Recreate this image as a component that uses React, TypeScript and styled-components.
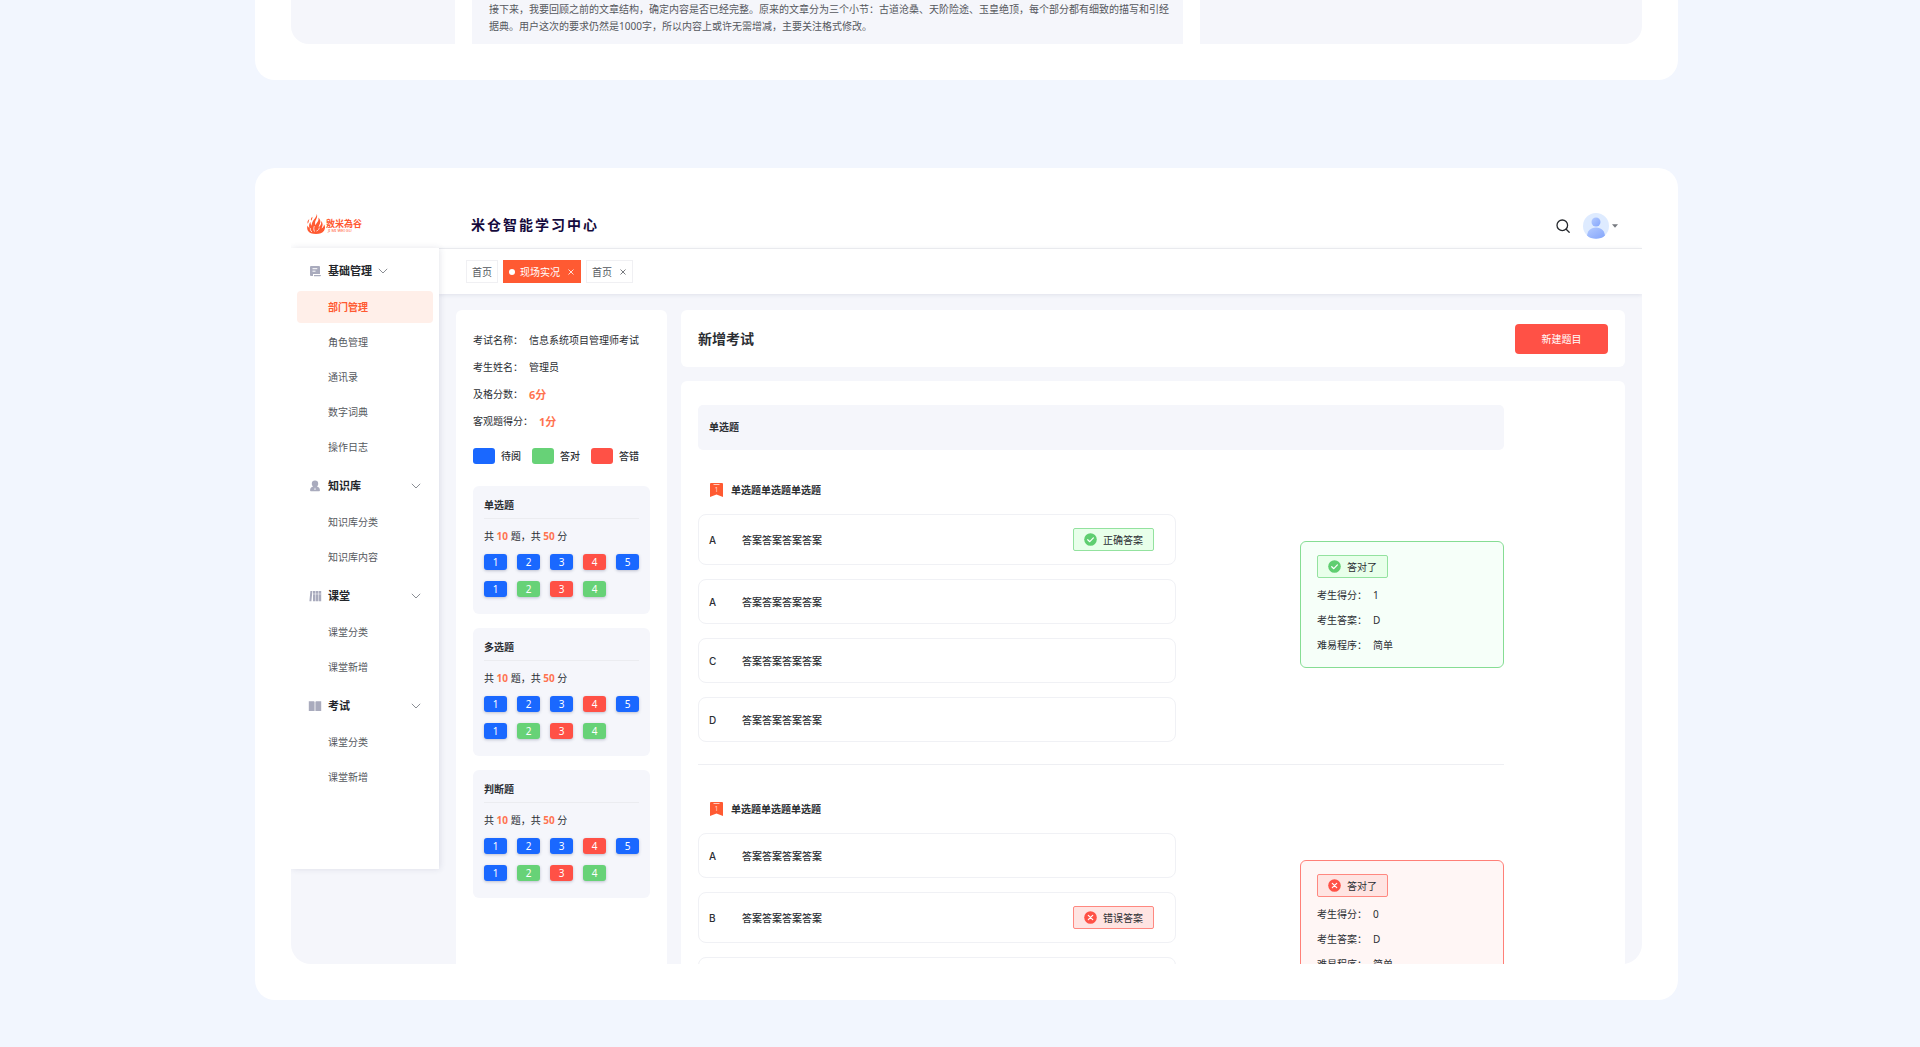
import React from "react";
import styled, { createGlobalStyle } from "styled-components";

const color = {
  page: "#f2f6fe",
  canvas: "#f5f6fb",
  text: "#2b2e33",
  muted: "#55585e",
  line: "#eeeff3",
  brand: "#ff5a32",
  pending: "#1a68ff",
  right: "#67d277",
  wrong: "#ff5146",
};

type Mark = "pending" | "right" | "wrong";

const GlobalStyle = createGlobalStyle`
  *, *::before, *::after { box-sizing: border-box; }
  body {
    margin: 0;
    background: ${color.page};
    color: ${color.text};
    font-family: "Noto Sans", "Noto Sans CJK SC", sans-serif;
    font-size: 10px;
    line-height: 16px;
  }
  h1, h2, h3, p, ul, ol, dl, dd { margin: 0; padding: 0; }
  ul, ol { list-style: none; }
  button { font: inherit; color: inherit; border: 0; padding: 0; background: none; cursor: pointer; }
  a { color: inherit; text-decoration: none; }
  svg { display: block; flex: none; }
`;

const Page = styled.div`
  display: flex;
  flex-direction: column;
  gap: 88px;
  padding: 0 242px 47px 255px;
`;

const Showcase = styled.section<{ $continued?: boolean }>`
  background: #fff;
  border-radius: ${(p) => (p.$continued ? "0 0 20px 20px" : "20px")};
  padding: ${(p) => (p.$continued ? "0 36px 36px" : "36px")};
`;

/* Article preview */

const ArticleScreen = styled.div`
  display: grid;
  grid-template-columns: 164fr 711fr 442fr;
  gap: 17px;
  border-radius: 0 0 18px 18px;
  overflow: hidden;
`;

const ArticleColumn = styled.div`
  background: ${color.canvas};
  padding: 1px 14px 9px 17px;
  line-height: 17px;
  color: ${color.muted};
`;

/* Exam preview */

const Screen = styled.div`
  display: flex;
  flex-direction: column;
  aspect-ratio: 16 / 9;
  background: ${color.canvas};
  border-radius: 0 0 20px 20px;
  overflow: hidden;
`;

const Header = styled.header`
  display: flex;
  flex: none;
  align-items: center;
  height: 44px;
  padding-right: 24px;
  background: #fff;
`;

const Brand = styled.a`
  display: flex;
  align-items: center;
  gap: 1px;
  width: 180px;
  padding: 0 0 4px 16px;
  color: ${color.brand};
`;

const BrandWords = styled.span`
  display: flex;
  flex-direction: column;
  padding-top: 3px;
  font-size: 9px;
  font-weight: 700;
  line-height: 11px;
`;

const BrandLatin = styled.small`
  padding-left: 2px;
  font-size: 4px;
  line-height: 4px;
  font-weight: 400;
`;

const ProductName = styled.h1`
  flex: 1;
  padding-bottom: 2px;
  color: #150a3c;
  font-size: 14px;
  line-height: 20px;
  font-weight: 700;
  letter-spacing: 2px;
`;

const HeaderTools = styled.div`
  display: flex;
  align-items: center;
  gap: 13px;
`;

const AccountButton = styled.button`
  display: flex;
  align-items: center;
  gap: 3px;
`;

const Workspace = styled.div`
  display: flex;
  flex: 1;
  min-height: 0;
  align-items: flex-start;
`;

const Sidebar = styled.nav`
  display: flex;
  flex: none;
  flex-direction: column;
  gap: 7px;
  width: 148px;
  padding: 7px 6px 76px;
  background: #fff;
  box-shadow: 1px 0 6px rgba(40, 50, 90, 0.12);
  position: relative;
`;

const MenuHead = styled.button<{ $compact?: boolean }>`
  display: flex;
  align-items: center;
  width: 100%;
  height: 32px;
  padding: 0 12px 0 11px;
  gap: 6px;
  font-size: 11px;
  font-weight: 600;
  text-align: left;
  color: #23262b;

  & > span {
    flex: ${(p) => (p.$compact ? "none" : "1")};
  }
`;

const MenuIcon = styled.svg`
  width: 14px;
  height: 12px;
  fill: #a9abbd;
`;

const MenuList = styled.ul`
  display: flex;
  flex-direction: column;
  gap: 3px;
  padding-top: 4px;
`;

const MenuLink = styled.a<{ $active?: boolean }>`
  display: block;
  padding: 8px 0 8px 31px;
  border-radius: 4px;
  color: ${(p) => (p.$active ? color.brand : color.muted)};
  font-weight: ${(p) => (p.$active ? 600 : 400)};
  background: ${(p) => (p.$active ? "#ffefe9" : "transparent")};
`;

const Main = styled.main`
  display: flex;
  flex: 1;
  flex-direction: column;
  align-self: stretch;
  min-width: 0;
`;

const TabBar = styled.div`
  display: flex;
  flex: none;
  gap: 5px;
  padding: 11px 27px;
  background: #fff;
  border-top: 1px solid #e9eaee;
  box-shadow: 0 1px 4px rgba(40, 50, 90, 0.1);
`;

const Tab = styled.div<{ $active?: boolean }>`
  display: flex;
  align-items: center;
  height: 23px;
  padding: 0 5px;
  border: 1px solid ${(p) => (p.$active ? color.brand : "#f0f0f3")};
  background: ${(p) => (p.$active ? color.brand : "#fff")};
  color: ${(p) => (p.$active ? "#fff" : color.muted)};
`;

const TabDot = styled.span`
  width: 6px;
  height: 6px;
  margin-right: 5px;
  border-radius: 50%;
  background: #fff;
`;

const TabClose = styled.button`
  margin: 0 1px 0 8px;
`;

const Content = styled.div`
  display: flex;
  flex: 1;
  min-height: 0;
  gap: 14px;
  padding: 16px 17px 0;
`;

const ExamPanel = styled.aside`
  flex: none;
  width: 211px;
  padding: 17px;
  background: #fff;
  border-radius: 6px 6px 0 0;
`;

const Facts = styled.dl<{ $pitch: number }>`
  line-height: ${(p) => p.$pitch}px;

  & > div {
    display: flex;
    gap: 6px;
  }
`;

const Score = styled.dd`
  color: #ff7350;
  font-size: 11px;
  font-weight: 700;
`;

const Legend = styled.ul`
  display: flex;
  gap: 11px;
  padding: 13px 0 22px;
  font-weight: 500;

  & > li {
    display: flex;
    gap: 6px;
  }
`;

const Swatch = styled.span<{ $mark: Mark }>`
  width: 22px;
  height: 16px;
  border-radius: 3px;
  background: ${(p) => color[p.$mark]};
`;

const GroupStack = styled.div`
  display: flex;
  flex-direction: column;
  gap: 14px;
`;

const GroupCard = styled.section`
  padding: 11px 11px 17px;
  background: ${color.canvas};
  border-radius: 6px;
`;

const GroupTitle = styled.h3`
  padding-bottom: 5px;
  border-bottom: 1px solid #ebecf0;
  font-size: 10px;
  font-weight: 600;
`;

const GroupSummary = styled.p`
  padding: 9px 0 10px;

  & > b {
    color: #ff7350;
  }
`;

const NumberGrid = styled.div`
  display: grid;
  grid-template-columns: repeat(5, 23px);
  justify-content: space-between;
  row-gap: 11px;
`;

const NumberChip = styled.button<{ $mark: Mark }>`
  height: 16px;
  border-radius: 3px;
  background: ${(p) => color[p.$mark]};
  box-shadow: 0 1px 3px rgba(60, 70, 110, 0.3);
  color: #fff;
  text-align: center;
`;

const PaperColumn = styled.div`
  display: flex;
  flex: 1;
  flex-direction: column;
  gap: 14px;
  min-width: 0;
`;

const TitlePanel = styled.div`
  display: flex;
  align-items: center;
  justify-content: space-between;
  height: 57px;
  padding: 0 17px;
  background: #fff;
  border-radius: 6px;
`;

const PanelTitle = styled.h2`
  font-size: 14px;
  line-height: 20px;
  font-weight: 600;
`;

const PrimaryButton = styled.button`
  width: 93px;
  height: 30px;
  border-radius: 4px;
  background: ${color.wrong};
  color: #fff;
`;

const PaperPanel = styled.div`
  flex: 1;
  min-height: 0;
  padding: 24px 121px 0 17px;
  background: #fff;
  border-radius: 6px 6px 0 0;
`;

const SectionBar = styled.h3`
  padding: 14px 11px 15px;
  background: ${color.canvas};
  border-radius: 5px;
  font-size: 10px;
  font-weight: 600;
`;

const Question = styled.article`
  display: grid;
  grid-template-columns: 478fr 204fr;
  column-gap: 124px;
  align-items: start;
  padding: 30px 0 22px;
  border-bottom: 1px solid ${color.line};

  & + & {
    padding-top: 34px;
  }
`;

const QuestionTitle = styled.h4`
  display: flex;
  grid-column: 1 / -1;
  align-items: center;
  gap: 8px;
  height: 20px;
  margin: 0 0 14px;
  padding-left: 12px;
  font-size: 10px;
  font-weight: 600;
`;

const Answers = styled.ol`
  display: flex;
  flex-direction: column;
  gap: 14px;
`;

const Answer = styled.li`
  display: flex;
  align-items: center;
  min-height: 45px;
  padding: 13px 21px 13px 10px;
  border: 1px solid #f0f1f5;
  border-radius: 8px;
  font-weight: 500;
`;

const AnswerKey = styled.span`
  width: 33px;
  font-family: Inter, "Noto Sans", sans-serif;
`;

const AnswerText = styled.span`
  flex: 1;
`;

const Tag = styled.span<{ $ok: boolean }>`
  display: inline-flex;
  align-items: center;
  gap: 6px;
  height: 23px;
  padding: 0 10px;
  border: 1px solid ${(p) => (p.$ok ? "#93e29f" : "#ff8880")};
  border-radius: 2px;
  background: ${(p) => (p.$ok ? "#e8ffea" : "#ffe4e2")};
  font-weight: 400;
`;

const ResultCard = styled.div<{ $ok: boolean }>`
  margin-top: 27px;
  padding: 13px 16px 9px;
  border: 1px solid ${(p) => (p.$ok ? "#86dd94" : "#ff8078")};
  border-radius: 6px;
  background: ${(p) => (p.$ok ? "#f6fff9" : "#fff6f5")};

  & > dl {
    padding-top: 5px;
  }
`;

/* Drawings */

const Flame = () => (
  <svg width="18" height="20" viewBox="0 0 18 20" fill={color.brand} aria-hidden>
    <path d="M9.800 0c.7 2.200.3 3.800-.7 5.400C8 7.300 7.800 9 8.300 11.200c.8-1.200 1.700-2.300 2.500-3.600.8-1.400.9-2.700.5-4.100 2 1.700 2.500 3.800 1.700 6-.6 1.500-1.200 2.400-1.300 3.700 1.200-.9 1.900-2 2.300-3.300.3-1 .3-1.800 0-2.800 1.500 1.300 1.900 3 1.400 4.900-.3 1-.7 1.700-.7 2.600.9-.6 1.500-1.400 1.900-2.300.3-.7.4-1.300.3-2.100 1.500 1.900 1.500 4.500.1 6.500C15.400 19 12.800 20 9 20c-4 0-6.700-.9-8.100-3.200C0 15.200-.1 13.300.6 11.400c.3 1 .9 1.900 1.800 2.600C1.700 11.800 2 9.700 3.500 7.700c-.1 1.500.2 2.900 1.100 4.100C4.700 9.400 5.400 7.500 7 5.500 8.500 3.600 9.700 2.100 9.800 0z" />
    <path d="M.8 9.800C.1 8 .6 6.500 2.300 5c-.5 1.600-.4 3-1.500 4.800zM4.100 6.700c-.5-1.600 0-2.900 1.400-4-.2 1.400-.3 2.600-1.400 4z" />
    <path d="M5 18c-1.600-1.300-2-2.600-1.600-4M7.500 17.500c-1-2-.8-3.600-.2-5.300M9.500 17c2-.6 2.600-2 2.700-3.400" stroke="#fff" strokeWidth=".8" fill="none" />
  </svg>
);

const SearchIcon = () => (
  <svg width="14" height="14" viewBox="0 0 14 14" fill="none" stroke="#26292e" strokeWidth="1.300" strokeLinecap="round" aria-hidden>
    <circle cx="6.300" cy="6.300" r="5.300" />
    <path d="M10.200 10.200 13.200 13.200" />
  </svg>
);

const Avatar = () => (
  <svg width="26" height="26" viewBox="0 0 26 26" aria-hidden>
    <defs>
      <linearGradient id="avatar" x1="0" y1="0" x2="1" y2="1">
        <stop offset="0" stopColor="#b4cbff" />
        <stop offset="1" stopColor="#84a5fb" />
      </linearGradient>
      <clipPath id="avatarClip">
        <circle cx="13" cy="13" r="13" />
      </clipPath>
    </defs>
    <g clipPath="url(#avatarClip)">
      <rect width="26" height="26" fill="#deebff" />
      <circle cx="13" cy="9" r="4.500" fill="url(#avatar)" />
      <path d="M4 24c0-6 3.500-9.500 9-9.500s9 3.500 9 9.500c-2.500 2.200-15.500 2.200-18 0z" fill="url(#avatar)" />
    </g>
  </svg>
);

const Caret = () => (
  <svg width="6" height="4" viewBox="0 0 6 4" fill="#777a80" aria-hidden>
    <path d="M0 .3h6L3 3.700z" />
  </svg>
);

const Chevron = () => (
  <svg width="10" height="10" viewBox="0 0 10 10" fill="none" stroke="#8b8e94" aria-hidden>
    <path d="M.8 2.800 5 7l4.200-4.200" />
  </svg>
);

const Cross = () => (
  <svg width="6" height="6" viewBox="0 0 6 6" fill="none" stroke="currentColor" strokeWidth=".8" aria-hidden>
    <path d="M.5.5l5 5M5.500.5l-5 5" />
  </svg>
);

const Verdict = ({ ok }: { ok: boolean }) => (
  <svg width="13" height="13" viewBox="0 0 13 13" fill="none" stroke="#fff" strokeWidth="1.200" strokeLinecap="round" strokeLinejoin="round" aria-hidden>
    <circle cx="6.500" cy="6.500" r="6.300" fill={ok ? "#5fce70" : color.wrong} stroke="none" />
    {ok ? <path d="M3.700 6.700 5.800 8.700 9.400 4.900" /> : <path d="M4.300 4.300l4.400 4.400M8.700 4.300 4.300 8.700" />}
  </svg>
);

const Bookmark = () => (
  <svg width="13" height="14" viewBox="0 0 13 14" aria-hidden>
    <path d="M1 0h11a1 1 0 0 1 1 1v13l-6.500-2.500L0 14V1a1 1 0 0 1 1-1z" fill={color.brand} />
    <path d="M3.500 1.500h6" stroke="#fff" strokeWidth=".7" />
    <text x="6.500" y="9.300" fill="#ffd5c8" fontSize="7" fontWeight="400" textAnchor="middle">1</text>
  </svg>
);

const menuIcons: Record<string, React.ReactNode> = {
  base: (
    <>
      <path d="M3 1h8a1 1 0 0 1 1 1v7H5v2H3a1 1 0 0 1-1-1V2a1 1 0 0 1 1-1zM6 10h7c0 .9-.5 1.300-1.300 1.300H6z" />
      <path d="M4.500 3.700h4.800M4.500 6.200h3" stroke="#fff" strokeWidth="1" />
    </>
  ),
  knowledge: (
    <>
      <path d="M7 .6a3.200 3.200 0 0 1 3.200 3.200c0 1.300-.6 2.200-1.300 2.800 1.800.6 3 1.500 3 3.400v.6c0 .4-.3.700-.7.700H2.800c-.4 0-.7-.3-.7-.7V10c0-1.900 1.200-2.800 3-3.400-.7-.6-1.300-1.500-1.300-2.800A3.200 3.200 0 0 1 7 .6z" />
      <path d="M7 7.300 6.300 9.800h1.400z" fill="#fff" />
    </>
  ),
  lesson: (
    <>
      <path d="M2.400 1h2L3.400 11.300H1.400zM5 1h2.400v10.300H5zM7.900 1h2.400v10.300H7.900zM10.800 1h2.400v10.300h-2.400z" />
      <path d="M5 4h8.200" stroke="#fff" strokeWidth=".5" />
    </>
  ),
  exam: <path d="M.8 1.200h5c.4 0 .8.3.8.8v9H.8zM13.200 1.200h-5c-.4 0-.8.3-.8.8v9h5.800z" />,
};

/* Data */

const menu = [
  { icon: "base", title: "基础管理", items: ["部门管理", "角色管理", "通讯录", "数字词典", "操作日志"] },
  { icon: "knowledge", title: "知识库", items: ["知识库分类", "知识库内容"] },
  { icon: "lesson", title: "课堂", items: ["课堂分类", "课堂新增"] },
  { icon: "exam", title: "考试", items: ["课堂分类", "课堂新增"] },
];

const legend: [Mark, string][] = [
  ["pending", "待阅"],
  ["right", "答对"],
  ["wrong", "答错"],
];

const numbers: [number, Mark][] = [
  [1, "pending"],
  [2, "pending"],
  [3, "pending"],
  [4, "wrong"],
  [5, "pending"],
  [1, "pending"],
  [2, "right"],
  [3, "wrong"],
  [4, "right"],
];

type AnswerItem = { key: string; text: string; tag?: string };

const answer = "答案答案答案答案";

const questions: { title: string; ok: boolean; score: string; answers: AnswerItem[] }[] = [
  {
    title: "单选题单选题单选题",
    ok: true,
    score: "1",
    answers: [
      { key: "A", text: answer, tag: "正确答案" },
      { key: "A", text: answer },
      { key: "C", text: answer },
      { key: "D", text: answer },
    ],
  },
  {
    title: "单选题单选题单选题",
    ok: false,
    score: "0",
    answers: [
      { key: "A", text: answer },
      { key: "B", text: answer, tag: "错误答案" },
      { key: "", text: "" },
    ],
  },
];

export default function App() {
  return (
    <>
      <GlobalStyle />
      <Page>
        <Showcase $continued>
          <ArticleScreen>
            <ArticleColumn />
            <ArticleColumn>
              <p>
                接下来，我要回顾之前的文章结构，确定内容是否已经完整。原来的文章分为三个小节：古道沧桑、天阶险途、玉皇绝顶，每个部分都有细致的描写和引经据典。用户这次的要求仍然是1000字，所以内容上或许无需增减，主要关注格式修改。
              </p>
            </ArticleColumn>
            <ArticleColumn />
          </ArticleScreen>
        </Showcase>

        <Showcase>
          <Screen>
            <Header>
              <Brand href="#">
                <Flame />
                <BrandWords>
                  敫米為谷
                  <BrandLatin>JI MI WEI GU</BrandLatin>
                </BrandWords>
              </Brand>
              <ProductName>米仓智能学习中心</ProductName>
              <HeaderTools>
                <button type="button" aria-label="搜索">
                  <SearchIcon />
                </button>
                <AccountButton type="button" aria-label="账户">
                  <Avatar />
                  <Caret />
                </AccountButton>
              </HeaderTools>
            </Header>

            <Workspace>
              <Sidebar>
                {menu.map((group, g) => (
                  <div key={group.title}>
                    <MenuHead type="button" $compact={g === 0}>
                      <MenuIcon viewBox="0 0 14 12" aria-hidden>
                        {menuIcons[group.icon]}
                      </MenuIcon>
                      <span>{group.title}</span>
                      <Chevron />
                    </MenuHead>
                    <MenuList>
                      {group.items.map((item, i) => (
                        <li key={item}>
                          <MenuLink href="#" $active={g === 0 && i === 0}>
                            {item}
                          </MenuLink>
                        </li>
                      ))}
                    </MenuList>
                  </div>
                ))}
              </Sidebar>

              <Main>
                <TabBar>
                  <Tab>
                    <a href="#">首页</a>
                  </Tab>
                  <Tab $active>
                    <TabDot />
                    <a href="#">现场实况</a>
                    <TabClose type="button" aria-label="关闭">
                      <Cross />
                    </TabClose>
                  </Tab>
                  <Tab>
                    <a href="#">首页</a>
                    <TabClose type="button" aria-label="关闭">
                      <Cross />
                    </TabClose>
                  </Tab>
                </TabBar>

                <Content>
                  <ExamPanel>
                    <Facts $pitch={27}>
                      <div>
                        <dt>考试名称：</dt>
                        <dd>信息系统项目管理师考试</dd>
                      </div>
                      <div>
                        <dt>考生姓名：</dt>
                        <dd>管理员</dd>
                      </div>
                      <div>
                        <dt>及格分数：</dt>
                        <Score>6分</Score>
                      </div>
                      <div>
                        <dt>客观题得分：</dt>
                        <Score>1分</Score>
                      </div>
                    </Facts>
                    <Legend>
                      {legend.map(([mark, label]) => (
                        <li key={mark}>
                          <Swatch $mark={mark} />
                          {label}
                        </li>
                      ))}
                    </Legend>
                    <GroupStack>
                      {["单选题", "多选题", "判断题"].map((title) => (
                        <GroupCard key={title}>
                          <GroupTitle>{title}</GroupTitle>
                          <GroupSummary>
                            共 <b>10</b> 题，共 <b>50</b> 分
                          </GroupSummary>
                          <NumberGrid>
                            {numbers.map(([n, mark], i) => (
                              <NumberChip key={i} type="button" $mark={mark}>
                                {n}
                              </NumberChip>
                            ))}
                          </NumberGrid>
                        </GroupCard>
                      ))}
                    </GroupStack>
                  </ExamPanel>

                  <PaperColumn>
                    <TitlePanel>
                      <PanelTitle>新增考试</PanelTitle>
                      <PrimaryButton type="button">新建题目</PrimaryButton>
                    </TitlePanel>
                    <PaperPanel>
                      <SectionBar>单选题</SectionBar>
                      {questions.map((q, i) => (
                        <Question key={i}>
                          <QuestionTitle>
                            <Bookmark />
                            {q.title}
                          </QuestionTitle>
                          <Answers>
                            {q.answers.map((a, n) => (
                              <Answer key={n}>
                                <AnswerKey>{a.key}</AnswerKey>
                                <AnswerText>{a.text}</AnswerText>
                                {a.tag && (
                                  <Tag $ok={q.ok}>
                                    <Verdict ok={q.ok} />
                                    {a.tag}
                                  </Tag>
                                )}
                              </Answer>
                            ))}
                          </Answers>
                          <ResultCard $ok={q.ok}>
                            <Tag $ok={q.ok}>
                              <Verdict ok={q.ok} />
                              答对了
                            </Tag>
                            <Facts $pitch={25}>
                              <div>
                                <dt>考生得分：</dt>
                                <dd>{q.score}</dd>
                              </div>
                              <div>
                                <dt>考生答案：</dt>
                                <dd>D</dd>
                              </div>
                              <div>
                                <dt>难易程序：</dt>
                                <dd>简单</dd>
                              </div>
                            </Facts>
                          </ResultCard>
                        </Question>
                      ))}
                    </PaperPanel>
                  </PaperColumn>
                </Content>
              </Main>
            </Workspace>
          </Screen>
        </Showcase>
      </Page>
    </>
  );
}
